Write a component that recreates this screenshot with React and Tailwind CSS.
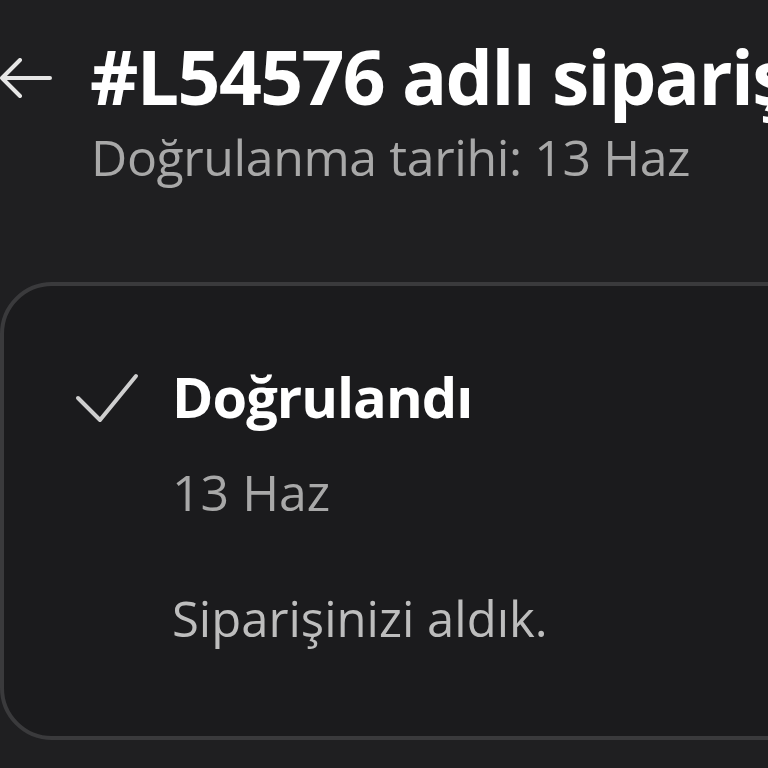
export default function App() {
  return (
    <div className="w-[768px] h-[768px] overflow-hidden bg-[#1f1f21] font-['Open_Sans',sans-serif]">
      <div className="flex items-center gap-[38px] pt-[28px]">
        <svg width="54" height="40" viewBox="0 0 54 40" className="shrink-0 -ml-[2px] mt-[4px]" fill="none" stroke="#e6e6e6" strokeWidth="4" strokeLinecap="round" strokeLinejoin="round">
          <path d="M52 20H4M22 2L4 20l18 18" />
        </svg>
        <h1 className="text-[75px] leading-[96px] font-bold text-white whitespace-nowrap tracking-[-1.6px]">
          #L54576 adlı sipariş
        </h1>
      </div>
      <div className="pl-[91px] mt-[3px] text-[50px] leading-[60px] text-[#a8a8a8] whitespace-nowrap tracking-[-0.4px]">
        Doğrulanma tarihi: 13 Haz
      </div>
      <div className="mt-[95px] w-[820px] h-[458px] rounded-[52px] border-[4px] border-[#3a3a3c] bg-[#1b1b1d] pl-[70px] pt-[70px]">
        <div className="flex items-start gap-[32px]">
          <svg width="66" height="56" viewBox="0 0 66 56" className="shrink-0 mt-[14px]" fill="none" stroke="#cfcfcf" strokeWidth="4" strokeLinecap="round" strokeLinejoin="round">
            <path d="M4 28l22 22L62 6" />
          </svg>
          <div className="flex flex-col">
            <div className="text-[56px] leading-[80px] font-bold text-white tracking-[-1px]">Doğrulandı</div>
            <div className="mt-[24px] text-[50px] leading-[64px] text-[#a8a8a8]">13 Haz</div>
            <div className="mt-[62px] text-[49px] leading-[64px] text-[#bdbdbd]">Siparişinizi aldık.</div>
          </div>
        </div>
      </div>
    </div>
  );
}
